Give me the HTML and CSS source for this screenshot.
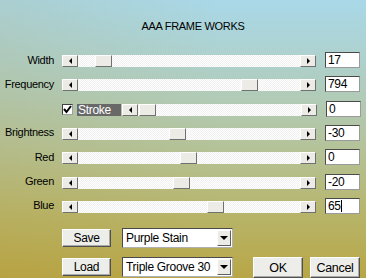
FILE: index.html
```html
<!DOCTYPE html>
<html>
<head>
<meta charset="utf-8">
<link rel="stylesheet" href="styles.css">
</head>
<body>
<div class="dialog">
  <div class="title">AAA FRAME WORKS</div>
  <div class="rows">
    <div class="row">
      <span class="label">Width</span>
      <div class="slider"><span class="sbtn"><i class="tri-l"></i></span><span class="track"><span class="thumb" style="margin-left:17px"></span></span><span class="sbtn"><i class="tri-r"></i></span></div>
      <span class="value">17</span>
    </div>
    <div class="row">
      <span class="label">Frequency</span>
      <div class="slider"><span class="sbtn"><i class="tri-l"></i></span><span class="track"><span class="thumb" style="margin-left:163px"></span></span><span class="sbtn"><i class="tri-r"></i></span></div>
      <span class="value">794</span>
    </div>
    <div class="row">
      <span class="label"></span>
      <span class="check"><svg width="9" height="9" viewBox="0 0 9 9"><polyline points="1,4 3.5,7 8,1" fill="none" stroke="#000" stroke-width="2"/></svg></span>
      <span class="chklabel">Stroke</span>
      <div class="slider short"><span class="sbtn"><i class="tri-l"></i></span><span class="track"><span class="thumb" style="margin-left:1px"></span></span><span class="sbtn"><i class="tri-r"></i></span></div>
      <span class="value">0</span>
    </div>
    <div class="row">
      <span class="label">Brightness</span>
      <div class="slider"><span class="sbtn"><i class="tri-l"></i></span><span class="track"><span class="thumb" style="margin-left:91px"></span></span><span class="sbtn"><i class="tri-r"></i></span></div>
      <span class="value">-30</span>
    </div>
    <div class="row">
      <span class="label">Red</span>
      <div class="slider"><span class="sbtn"><i class="tri-l"></i></span><span class="track"><span class="thumb" style="margin-left:102px"></span></span><span class="sbtn"><i class="tri-r"></i></span></div>
      <span class="value">0</span>
    </div>
    <div class="row">
      <span class="label">Green</span>
      <div class="slider"><span class="sbtn"><i class="tri-l"></i></span><span class="track"><span class="thumb" style="margin-left:95px"></span></span><span class="sbtn"><i class="tri-r"></i></span></div>
      <span class="value">-20</span>
    </div>
    <div class="row">
      <span class="label">Blue</span>
      <div class="slider"><span class="sbtn"><i class="tri-l"></i></span><span class="track"><span class="thumb" style="margin-left:129px"></span></span><span class="sbtn"><i class="tri-r"></i></span></div>
      <span class="value">65<span class="caret"></span></span>
    </div>
  </div>
  <div class="bottom">
    <div class="brow">
      <span class="btn small">Save</span>
      <span class="select"><span class="seltext">Purple Stain</span><span class="selbtn"><i class="tri-d"></i></span></span>
    </div>
    <div class="brow">
      <span class="btn small">Load</span>
      <span class="select"><span class="seltext">Triple Groove 30</span><span class="selbtn"><i class="tri-d"></i></span></span>
      <span class="btn big ok">OK</span>
      <span class="btn big cancel">Cancel</span>
    </div>
  </div>
</div>
</body>
</html>
```

FILE: styles.css
```css
html, body {
  margin: 0;
  padding: 0;
}
body {
  width: 366px;
  height: 278px;
  overflow: hidden;
  font-family: "Liberation Sans", Arial, sans-serif;
  font-size: 11px;
  color: #000;
  background:
    linear-gradient(to right, rgba(180, 140, 40, 0.12), rgba(180, 140, 40, 0) 60%),
    linear-gradient(to bottom, #a9d8e8 0%, #aed1cc 22%, #b2c8ac 42%, #b5bf8c 60%, #b7b468 78%, #b8a646 100%);
}
.dialog {
  display: flex;
  flex-direction: column;
}
.title {
  padding: 20px 0 0 20px;
  line-height: 13px;
  height: 13px;
  text-align: center;
  letter-spacing: -0.3px;
}
.rows {
  display: flex;
  flex-direction: column;
  gap: 8.33px;
  margin-top: 19px;
}
.row {
  display: flex;
  align-items: center;
  height: 16px;
}
.label {
  width: 54px;
  text-align: right;
  letter-spacing: -0.3px;
  line-height: 13px;
}
.slider {
  display: flex;
  width: 254px;
  height: 12px;
  margin-left: 8px;
  margin-top: 2px;
}
.slider.short {
  width: 195px;
  margin-left: 1px;
}
.sbtn, .thumb {
  box-sizing: border-box;
  height: 12px;
  background: #ecebe6;
  border-top: 1px solid #ffffff;
  border-left: 1px solid #ffffff;
  border-right: 1px solid #707070;
  border-bottom: 1px solid #707070;
}
.sbtn {
  width: 16px;
  display: flex;
  align-items: center;
  justify-content: center;
  flex: none;
}
.thumb {
  display: block;
  width: 17px;
}
.track {
  flex: 1;
  height: 12px;
  background: repeating-conic-gradient(#ffffff 0 25%, #f0f0f0 0 50%) 0 0 / 2px 2px;
}
.tri-l {
  display: block;
  width: 0;
  height: 0;
  border-top: 3px solid transparent;
  border-bottom: 3px solid transparent;
  border-right: 3px solid #000;
}
.tri-r {
  display: block;
  width: 0;
  height: 0;
  border-top: 3px solid transparent;
  border-bottom: 3px solid transparent;
  border-left: 3px solid #000;
}
.tri-d {
  display: block;
  width: 0;
  height: 0;
  border-left: 4px solid transparent;
  border-right: 4px solid transparent;
  border-top: 4px solid #000;
}
.value {
  box-sizing: border-box;
  margin-left: 9px;
  width: 35px;
  height: 16px;
  background: #fff;
  border: 1px solid;
  border-color: #4a4a4a #9a9a9a #9a9a9a #4a4a4a;
  font-size: 12px;
  line-height: 14px;
  padding-left: 2px;
  letter-spacing: -0.3px;
  display: flex;
  align-items: center;
}
.caret {
  display: inline-block;
  width: 1px;
  height: 12px;
  background: #000;
}
.check {
  box-sizing: border-box;
  margin-left: 8px;
  margin-top: 2px;
  width: 11px;
  height: 11px;
  background: #fff;
  border: 1px solid;
  border-color: #404040 #a0a0a0 #a0a0a0 #404040;
  display: flex;
  align-items: center;
  justify-content: center;
}
.chklabel {
  margin-left: 4px;
  margin-top: 2px;
  width: 44px;
  height: 12px;
  line-height: 12px;
  background: #686868;
  color: #fff;
  padding-left: 1px;
  box-sizing: border-box;
  font-size: 12px;
  letter-spacing: -0.3px;
}
.bottom {
  display: flex;
  flex-direction: column;
  gap: 8px;
  margin-top: 14px;
  padding-left: 62px;
}
.brow {
  display: flex;
  align-items: center;
  height: 21px;
}
.btn {
  box-sizing: border-box;
  background: #ededea;
  border-top: 1px solid #ffffff;
  border-left: 1px solid #ffffff;
  border-right: 1px solid #505050;
  border-bottom: 1px solid #505050;
  box-shadow: inset -1px -1px 0 #a8a8a8;
  display: flex;
  align-items: center;
  justify-content: center;
  font-size: 12px;
  letter-spacing: -0.3px;
}
.btn.small {
  width: 49px;
  height: 18px;
}
.btn.big {
  width: 50px;
  height: 21px;
  margin-top: 1px;
  font-size: 12.5px;
}
.btn.ok {
  margin-left: 20px;
}
.btn.cancel {
  margin-left: 7px;
}
.select {
  box-sizing: border-box;
  margin-left: 11px;
  width: 111px;
  height: 20px;
  background: #fff;
  border: 1px solid;
  border-color: #4a4a4a #b0b0b0 #b0b0b0 #4a4a4a;
  display: flex;
  align-items: center;
  padding: 1px;
}
.seltext {
  flex: 1;
  padding-left: 2px;
  font-size: 12px;
  letter-spacing: -0.3px;
  white-space: nowrap;
  overflow: hidden;
}
.selbtn {
  box-sizing: border-box;
  width: 14px;
  height: 16px;
  background: #ecebe6;
  border-top: 1px solid #fff;
  border-left: 1px solid #fff;
  border-right: 1px solid #606060;
  border-bottom: 1px solid #606060;
  display: flex;
  align-items: center;
  justify-content: center;
}
```
